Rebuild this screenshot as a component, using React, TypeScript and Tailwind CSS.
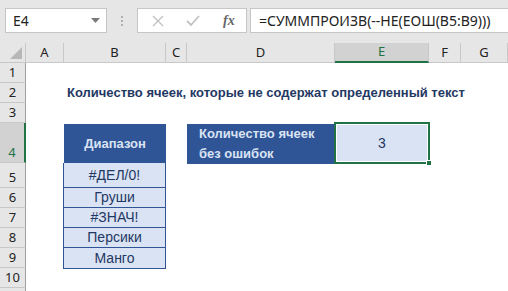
import React from "react";

const cellFont = { fontFamily: '"Liberation Sans", Arial, sans-serif' };
const uiFont = { fontFamily: '"Noto Sans", "Open Sans", sans-serif' };

function RowHead({ n, h, sel }: { n: number | null; h: string; sel?: boolean }) {
  return (
    <div
      className={
        "flex items-end justify-center pb-[1px] text-[13px] leading-[17px] border-b " +
        h +
        " " +
        (sel
          ? "bg-[#d2d2d2] border-b-[#c8c8c8] border-r-2 border-r-[#217346] text-[#217346]"
          : "bg-[#e6e6e6] border-b-[#c8c8c8] border-r border-r-[#9f9f9f] text-[#222]")
      }
      style={uiFont}
    >
      {n}
    </div>
  );
}

export default function App() {
  const cols = [
    { l: "A", w: "w-[38px]" },
    { l: "B", w: "w-[102px]" },
    { l: "C", w: "w-[21px]" },
    { l: "D", w: "w-[148px]" },
    { l: "E", w: "w-[94px]", sel: true },
    { l: "F", w: "w-[32px]" },
    { l: "G", w: "flex-1" },
  ];
  const rows: { n: number | null; h: string; sel?: boolean }[] = [
    { n: 1, h: "h-[20px]" },
    { n: 2, h: "h-[20px]" },
    { n: 3, h: "h-[20px]" },
    { n: 4, h: "h-[40px]", sel: true },
    { n: 5, h: "h-[25px]" },
    { n: 6, h: "h-[20px]" },
    { n: 7, h: "h-[20px]" },
    { n: 8, h: "h-[20px]" },
    { n: 9, h: "h-[20px]" },
    { n: 10, h: "h-[20px]" },
    { n: null, h: "h-[20px]" },
  ];
  const data = ["Груши", "#ЗНАЧ!", "Персики", "Манго"];

  return (
    <div className="w-[508px] h-[291px] overflow-hidden bg-white relative">
      {/* toolbar */}
      <div className="h-[43px] bg-[#e6e6e6] flex items-start pt-[8px]">
        <div
          className="ml-[5px] w-[102px] h-[25px] bg-white border border-[#c6c6c6] flex items-center pl-[7px] pr-[6px] text-[14px] text-[#222]"
          style={uiFont}
        >
          <span className="flex-1">E4</span>
          <svg width="9" height="5" viewBox="0 0 9 5">
            <path d="M0 0 H9 L4.5 5 Z" fill="#7a7a7a" />
          </svg>
        </div>
        <div className="w-[30px] h-[25px] flex flex-col items-center justify-center gap-[2px]">
          <div className="w-[2px] h-[2px] bg-[#b0b0b0]" />
          <div className="w-[2px] h-[2px] bg-[#b0b0b0]" />
          <div className="w-[2px] h-[2px] bg-[#b0b0b0]" />
        </div>
        <div className="w-[110px] h-[25px] bg-white border border-[#c6c6c6] flex items-center">
          <svg className="ml-[14px]" width="12" height="12" viewBox="0 0 12 12">
            <path d="M1 1 L11 11 M11 1 L1 11" stroke="#c2c2c2" strokeWidth="1.4" />
          </svg>
          <svg className="ml-[22px]" width="14" height="12" viewBox="0 0 14 12">
            <path d="M1 6 L5 10 L13 1" stroke="#c2c2c2" strokeWidth="1.8" fill="none" />
          </svg>
          <span
            className="ml-[23px] text-[14px] italic text-[#666] leading-none"
            style={{ fontFamily: '"Liberation Serif", serif', fontWeight: 600 }}
          >
            fx
          </span>
        </div>
        <div
          className="ml-[3px] flex-1 h-[25px] bg-white border border-[#c6c6c6] border-r-0 flex items-center pl-[8px] text-[14px] text-[#222]"
          style={uiFont}
        >
          =СУММПРОИЗВ(--НЕ(ЕОШ(B5:B9)))
        </div>
      </div>

      {/* column headers */}
      <div className="flex h-[20px]">
        <div className="w-[26px] h-full bg-[#e6e6e6] border-r border-b border-[#c8c8c8] relative">
          <svg className="absolute right-[3px] bottom-[3px]" width="12" height="12" viewBox="0 0 12 12">
            <path d="M12 0 V12 H0 Z" fill="#b7b7b7" />
          </svg>
        </div>
        {cols.map((c) => (
          <div
            key={c.l}
            className={
              c.w +
              " h-full flex items-center justify-center text-[13px] " +
              (c.sel
                ? "bg-[#d2d2d2] border-r border-r-[#c8c8c8] border-b-2 border-b-[#217346] text-[#217346]"
                : "bg-[#e6e6e6] border-r border-b border-[#c8c8c8] text-[#222]")
            }
            style={uiFont}
          >
            {c.l}
          </div>
        ))}
      </div>

      {/* body */}
      <div className="flex">
        <div className="w-[26px] flex flex-col">
          {rows.map((r, i) => (
            <RowHead key={i} n={r.n} h={r.h} sel={r.sel} />
          ))}
        </div>
        <div className="flex-1 flex flex-col" style={cellFont}>
          <div className="h-[20px]" />
          <div className="h-[20px] flex items-center pl-[41px] text-[13px] font-bold text-[#1f3864] whitespace-nowrap">
            Количество ячеек, которые не содержат определенный текст
          </div>
          <div className="h-[20px]" />
          {/* row 4 */}
          <div className="h-[40px] flex">
            <div className="w-[38px]" />
            <div className="w-[102px] h-[40px] bg-[#2f5597] mt-[1px] flex items-center justify-center text-[13px] font-bold text-[#dae3f3]">
              Диапазон
            </div>
            <div className="w-[21px]" />
            <div className="w-[147px] h-[40px] bg-[#2f5597] mt-[1px] flex flex-col justify-center pl-[12px] text-[13px] font-bold text-[#dae3f3] leading-[20px]">
              <span>Количество ячеек</span>
              <span>без ошибок</span>
            </div>
            <div className="w-[96px] h-[42px] -mt-[1px] border-2 border-[#217346] relative">
              <div className="w-full h-full border border-white bg-[#dae3f3] flex items-center justify-center text-[14px] text-[#1f3864]">
                3
              </div>
              <div className="absolute -right-[4px] -bottom-[4px] w-[6px] h-[6px] bg-[#217346] border border-white" />
            </div>
          </div>
          {/* data rows */}
          <div className="flex">
            <div className="w-[38px]" />
            <div className="w-[103px] -ml-[1px] flex flex-col border border-t-0 border-[#2f5597] bg-[#dae3f3] text-[14px] text-[#1f3864]">
              <div className="h-[25px] border-b border-[#2f5597] flex items-center justify-center pt-[1px]">
                #ДЕЛ/0!
              </div>
              {data.map((d, i) => (
                <div
                  key={d}
                  className={
                    "h-[20px] flex items-center justify-center " +
                    (i < data.length - 1 ? "border-b border-[#2f5597]" : "h-[19px]")
                  }
                >
                  {d}
                </div>
              ))}
            </div>
          </div>
        </div>
      </div>
    </div>
  );
}
